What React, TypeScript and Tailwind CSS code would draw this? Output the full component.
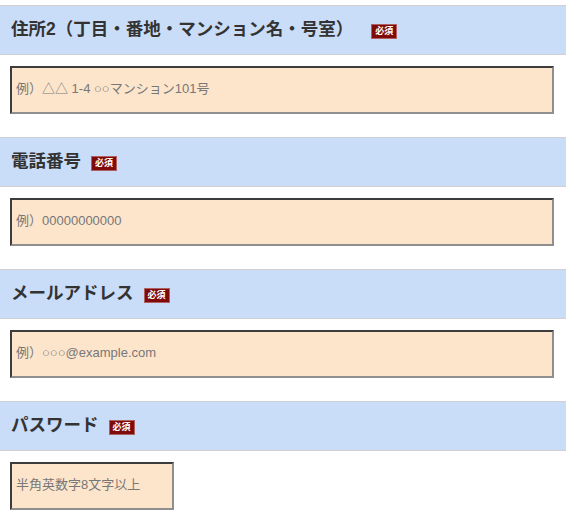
import React from "react";

const fields = [
  { title: "住所2（丁目・番地・マンション名・号室）", ph: "例）△△ 1-4 ○○マンション101号", full: true },
  { title: "電話番号", ph: "例）00000000000", full: true },
  { title: "メールアドレス", ph: "例）○○○@example.com", full: true },
  { title: "パスワード", ph: "半角英数字8文字以上", full: false },
];

export default function App() {
  return (
    <div
      className="bg-white w-[566px] h-[528px] overflow-hidden pt-[5px]"
      style={{ fontFamily: '"Liberation Sans", "Noto Sans CJK JP", sans-serif' }}
    >
      {fields.map((f, i) => (
        <div key={i}>
          <div className="h-[50px] border-y border-[#d0d0d0] bg-[#c9dcf8] flex items-center pl-[11px]">
            <span className="text-[17.5px] font-bold text-[#333] leading-none">{f.title}</span>
            <span
              className={`${i === 0 ? "ml-[18px]" : "ml-[10px]"} mt-[3px] w-[26px] h-[15px] bg-[#7f0a0a] border border-[#b06060] text-white text-[9px] font-bold flex items-center justify-center leading-none`}
            >
              必須
            </span>
          </div>
          <div className="pt-[11px] pb-[23px] pl-[10px] pr-[12px]">
            <input
              type="text"
              placeholder={f.ph}
              className={`${f.full ? "w-[544px]" : "w-[164px]"} h-[48px] bg-[#fde5cc] border-2 border-t-[#3c3c3c] border-l-[#3c3c3c] border-b-[#8f8f8f] border-r-[#8f8f8f] pl-[4px] pr-[4px] pb-[3px] text-[13px] text-[#333] placeholder:text-[#777] outline-none block`}
            />
          </div>
        </div>
      ))}
    </div>
  );
}
